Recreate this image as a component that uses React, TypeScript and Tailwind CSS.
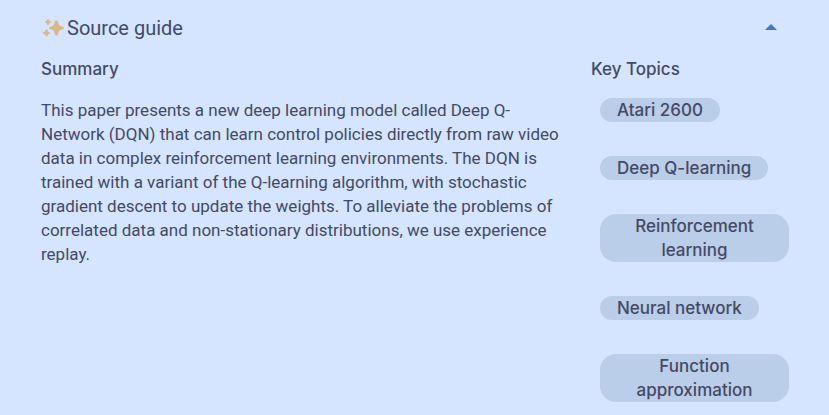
const topics = [
  "Atari 2600",
  "Deep Q-learning",
  "Reinforcement learning",
  "Neural network",
  "Function approximation",
];

function Sparkles() {
  return (
    <svg className="size-6" viewBox="0 0 24 24" fill="#d9b88a" aria-hidden="true">
      <path d="M14.4 4.5 H16.4 L18.4 9.4 L22.8 11.2 V12.8 L18.4 14.6 L16.4 19.5 H14.4 L12.6 14.6 L8.2 12.8 V11.2 L12.6 9.4Z" />
      <path d="M6.4 3.2 H7.6 L8.5 5 L10 5.6 V6.6 L8.5 7.2 L7.6 9 H6.4 L5.6 7.2 L4 6.6 V5.6 L5.6 5Z" />
      <path d="M4.8 13.6 H6.4 L7 15.8 L9 16.6 V17.8 L7 18.2 L6.2 20.4 H5 L4.2 18.6 L2 17.8 V16.6 L4.2 15.6Z" />
    </svg>
  );
}

export default function App() {
  return (
    <main className="min-h-screen bg-[#d5e4ff] px-10 pt-4 pb-3 font-['Roboto',sans-serif] text-[17px] leading-6 text-[#444a63]">
      <header className="flex items-center justify-between">
        <h1 className="flex items-center gap-0.5 pl-px text-xl leading-6">
          <Sparkles />
          Source guide
        </h1>
        <button type="button" aria-label="Collapse source guide" className="flex h-6 w-9 justify-center pt-2">
          <svg className="h-[6px] w-3" viewBox="0 0 12 6" fill="#4277bd" aria-hidden="true">
            <path d="M0 6 L6 0 L12 6Z" />
          </svg>
        </button>
      </header>
      <div className="mt-[17px] grid grid-cols-[1fr_198px] gap-x-[22px]">
        <section className="pl-px">
          <h2 className="font-['Inter',sans-serif] font-medium">Summary</h2>
          <p className="mt-[17px]">
            This paper presents a new deep learning model called Deep Q-<wbr />Network (DQN) that can learn control policies
            directly from raw video data in complex reinforcement learning environments. The DQN is trained with a
            variant of the Q-learning algorithm, with stochastic gradient descent to update the weights. To alleviate
            the problems of correlated data and non-stationary distributions, we use experience replay.
          </p>
        </section>
        <section className="font-['Inter',sans-serif] font-medium">
          <h2>Key Topics</h2>
          <ul className="mt-[17px] ml-[9px] flex flex-col items-start gap-[34px]">
            {topics.map((topic) => (
              <li key={topic}>
                <button type="button" className="block rounded-2xl bg-[#bacde9] px-[17px] text-center">
                  {topic}
                </button>
              </li>
            ))}
          </ul>
        </section>
      </div>
    </main>
  );
}
